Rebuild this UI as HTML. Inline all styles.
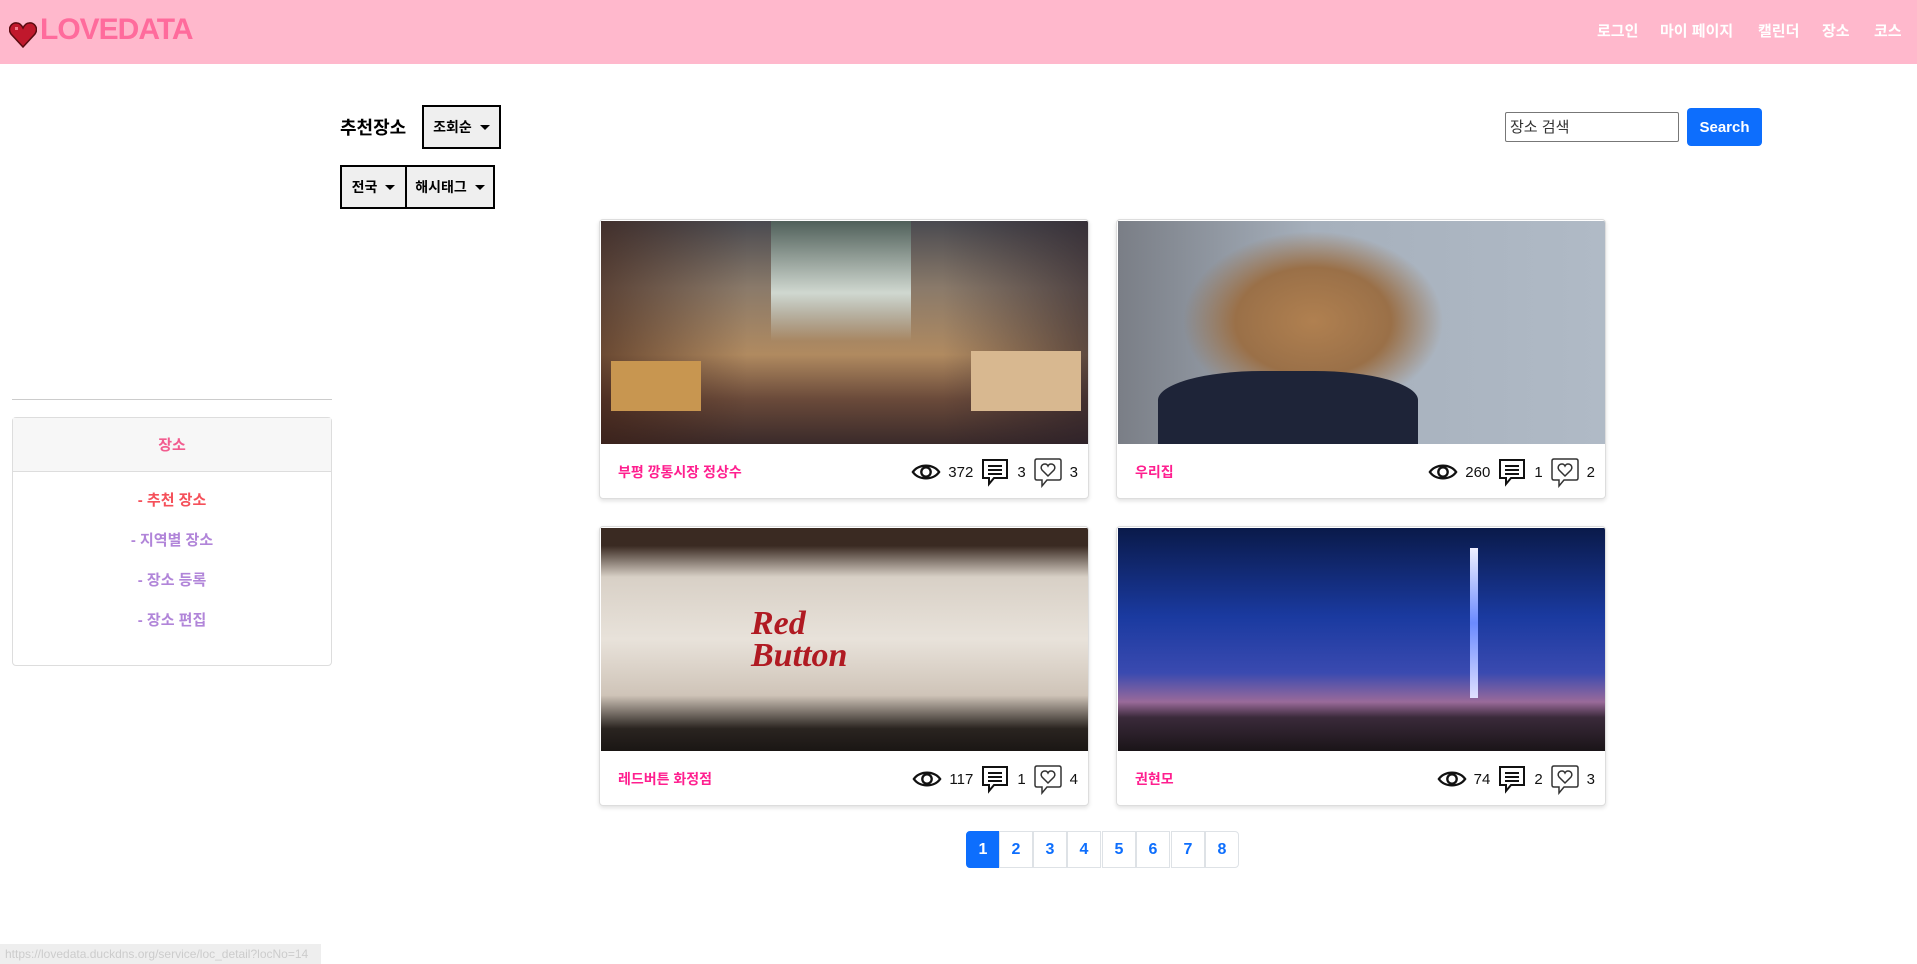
<!DOCTYPE html>
<html><head><meta charset="utf-8"><style>
*{box-sizing:border-box;margin:0;padding:0}
body{width:1917px;height:964px;position:relative;background:#fff;font-family:"Liberation Sans","Noto Sans CJK KR",sans-serif;overflow:hidden}
.a{position:absolute}
.hdr{left:0;top:0;width:1917px;height:64px;background:#ffb8cc}
.logo{left:40px;top:13px;font-size:30px;font-weight:bold;color:#ff6b9c;letter-spacing:-1px}
.nav{top:20px;color:#fff;font-weight:bold;font-size:15px}
.btn{background:#efefef;border:2px solid #000;font-size:14px;font-weight:bold;display:flex;align-items:center;justify-content:center;gap:8px}
.caret{width:0;height:0;border-left:5px solid transparent;border-right:5px solid transparent;border-top:5px solid #000}
.card{background:#fff;border:1px solid #ddd;border-radius:4px;box-shadow:0 2px 4px rgba(0,0,0,.12);width:490px;height:280px;overflow:hidden}
.img{position:absolute;left:1px;top:1px;width:488px;height:223px;overflow:hidden}
.ttl{position:absolute;left:18px;top:242px;font-size:14px;font-weight:bold;color:#ff1f8f}
.st{position:absolute;right:10px;top:236px;display:flex;align-items:center;gap:7px;font-size:15px;color:#111}
.pg{top:831px;height:37px;width:34px;border:1px solid #dee2e6;color:#0d6efd;font-size:16px;font-weight:bold;display:flex;align-items:center;justify-content:center;background:#fff}
.side{font-size:15px;font-weight:bold;color:#b185d9;width:320px;text-align:center;left:12px}
</style></head><body>
<div class="a hdr"></div>
<svg class="a" style="left:9px;top:22px" width="28" height="26" viewBox="0 0 28 26"><path d="M14 25 L2 12 C-2 6 3 0 8 1 C11 1 13 4 14 6 C15 4 17 1 20 1 C25 0 30 6 26 12 Z" fill="#c0182c" stroke="#5a0a10" stroke-width="1.5"/><path d="M6 5 L9 5 L9 8 L6 8Z" fill="#f47a8a"/></svg>
<div class="a logo">LOVEDATA</div>
<div class="a nav" style="left:1597px">로그인</div>
<div class="a nav" style="left:1660px">마이 페이지</div>
<div class="a nav" style="left:1758px">캘린더</div>
<div class="a nav" style="left:1822px">장소</div>
<div class="a nav" style="left:1874px">코스</div>

<div class="a" style="left:340px;top:114px;font-size:18px;font-weight:bold">추천장소</div>
<div class="a btn" style="left:422px;top:105px;width:79px;height:44px">조회순<span class="caret"></span></div>
<div class="a btn" style="left:340px;top:165px;width:67px;height:44px">전국<span class="caret"></span></div>
<div class="a btn" style="left:405px;top:165px;width:90px;height:44px">해시태그<span class="caret"></span></div>

<div class="a" style="left:1505px;top:112px;width:174px;height:30px;border:1px solid #777;border-radius:2px;font-size:15px;padding:3px 4px;color:#333">장소 검색</div>
<div class="a" style="left:1687px;top:108px;width:75px;height:38px;background:#0d6efd;border-radius:4px;color:#fff;font-size:15px;font-weight:bold;display:flex;align-items:center;justify-content:center">Search</div>

<div class="a" style="left:12px;top:399px;width:320px;height:1px;background:#ccc"></div>
<div class="a" style="left:12px;top:417px;width:320px;height:249px;border:1px solid #ddd;border-radius:4px"></div>
<div class="a" style="left:13px;top:418px;width:318px;height:54px;background:#f7f7f7;border-bottom:1px solid #ddd"></div>
<div class="a side" style="top:434px;color:#f25c8f">장소</div>
<div class="a side" style="top:489px;color:#f5505a">- 추천 장소</div>
<div class="a side" style="top:529px">- 지역별 장소</div>
<div class="a side" style="top:569px">- 장소 등록</div>
<div class="a side" style="top:609px">- 장소 편집</div>

<svg width="0" height="0" style="position:absolute"><defs>
<symbol id="eye" viewBox="0 0 32 22"><path d="M2 11 C8 2 24 2 30 11 C24 20 8 20 2 11Z" fill="none" stroke="#111" stroke-width="2.5"/><circle cx="16" cy="11" r="5" fill="none" stroke="#111" stroke-width="2.5"/></symbol>
<symbol id="cm" viewBox="0 0 30 30"><path d="M3 3 H27 V21 H14 L9 27 V21 H3Z" fill="none" stroke="#111" stroke-width="2"/><path d="M8 9H22M8 13H22M8 17H22" stroke="#111" stroke-width="2"/></symbol>
<symbol id="ht" viewBox="0 0 30 32"><path d="M4 3 H26 Q28 3 28 5 V22 Q28 24 26 24 H14 L9 30 V24 H4 Q2 24 2 22 V5 Q2 3 4 3Z" fill="none" stroke="#333" stroke-width="1.5"/><path d="M15 20 L9 14 C7 11 9 8 12 8 C13.5 8 14.5 9 15 10 C15.5 9 16.5 8 18 8 C21 8 23 11 21 14Z" fill="none" stroke="#333" stroke-width="1.5"/></symbol>
</defs></svg>

<div class="a card" style="left:599px;top:219px"><div class="img" style="background:linear-gradient(90deg,rgba(60,30,20,.6),rgba(0,0,0,0) 30%,rgba(0,0,0,0) 70%,rgba(40,30,40,.6)),linear-gradient(180deg,#4a4a50 0%,#8a7a6a 30%,#b08a60 60%,#6a4a3a 80%,#3a2a2a 100%)"><div style="position:absolute;left:170px;top:0;width:140px;height:120px;background:linear-gradient(#50605a,#d0d8d0 60%,rgba(200,200,200,0))"></div><div style="position:absolute;left:10px;top:140px;width:90px;height:50px;background:#c89650"></div><div style="position:absolute;left:370px;top:130px;width:110px;height:60px;background:#d8b890"></div></div><div class="ttl">부평 깡통시장 정상수</div><div class="st"><svg width="30" height="22"><use href="#eye"/></svg>372<svg width="30" height="30"><use href="#cm"/></svg>3<svg width="30" height="32"><use href="#ht"/></svg>3</div></div>
<div class="a card" style="left:1116px;top:219px"><div class="img" style="background:radial-gradient(ellipse 130px 90px at 40% 45%,#b08050,#9a7048 60%,rgba(150,110,80,0) 100%),linear-gradient(90deg,#7a7e86,#a6b0bc 40%,#b0bac6 100%)"><div style="position:absolute;left:40px;top:150px;width:260px;height:73px;background:#1e2438;border-radius:40% 40% 0 0"></div></div><div class="ttl">우리집</div><div class="st"><svg width="30" height="22"><use href="#eye"/></svg>260<svg width="30" height="30"><use href="#cm"/></svg>1<svg width="30" height="32"><use href="#ht"/></svg>2</div></div>
<div class="a card" style="left:599px;top:526px"><div class="img" style="background:linear-gradient(180deg,#3a2a22 0%,#3a2a22 8%,#d8d0c6 22%,#e8e2da 50%,#cfc4b8 75%,#2a2420 90%,#1a1614 100%)"><div style="position:absolute;left:150px;top:80px;color:#b01a22;font:italic bold 34px 'Liberation Serif',serif;line-height:32px">Red<br>Button</div></div><div class="ttl">레드버튼 화정점</div><div class="st"><svg width="30" height="22"><use href="#eye"/></svg>117<svg width="30" height="30"><use href="#cm"/></svg>1<svg width="30" height="32"><use href="#ht"/></svg>4</div></div>
<div class="a card" style="left:1116px;top:526px"><div class="img" style="background:linear-gradient(180deg,#0a1a4a 0%,#1a3aa0 40%,#3a4ab0 65%,#9a6a9a 78%,#3a2a3a 85%,#1a1418 100%)"><div style="position:absolute;left:352px;top:20px;width:8px;height:150px;background:linear-gradient(#f0f0ff,#6a8aff 50%,#e0e0ff)"></div></div><div class="ttl">권현모</div><div class="st"><svg width="30" height="22"><use href="#eye"/></svg>74<svg width="30" height="30"><use href="#cm"/></svg>2<svg width="30" height="32"><use href="#ht"/></svg>3</div></div>

<div class="a pg" style="left:966px;background:#0d6efd;color:#fff;border-color:#0d6efd;border-radius:4px 0 0 4px">1</div>
<div class="a pg" style="left:999px">2</div>
<div class="a pg" style="left:1033px">3</div>
<div class="a pg" style="left:1067px">4</div>
<div class="a pg" style="left:1102px">5</div>
<div class="a pg" style="left:1136px">6</div>
<div class="a pg" style="left:1171px">7</div>
<div class="a pg" style="left:1205px;border-radius:0 4px 4px 0">8</div>

<div class="a" style="left:0;top:944px;width:321px;height:20px;background:#eee;color:#ccc;font-size:12px;padding:3px 5px">https://lovedata.duckdns.org/service/loc_detail?locNo=14</div>
</body></html>
